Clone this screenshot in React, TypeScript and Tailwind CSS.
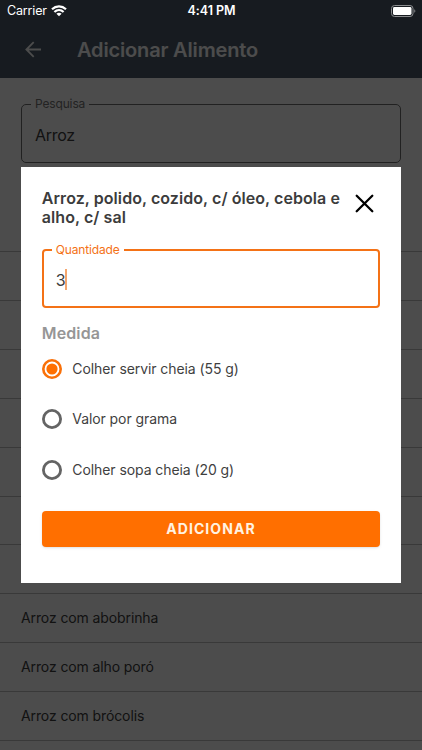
import React from "react";

const FOODS = ["", "", "", "", "", "", "", "Arroz com abobrinha", "Arroz com alho poró", "Arroz com brócolis", ""];

function StatusBar() {
  return (
    <div className="absolute inset-x-0 top-0 z-20 flex h-[22px] items-center justify-between pl-[7px] pr-[6px] text-white">
      <div className="flex flex-1 items-center gap-[4px]">
        <span className="text-[12.5px] leading-[22px] tracking-[-0.15px]">Carrier</span>
        <svg width="16" height="12" viewBox="0 0 16 12" fill="none" stroke="white">
          <path d="M1 4.2C5 .4 11 .4 15 4.2" strokeWidth="2.2" />
          <path d="M3.4 7C6.1 4.5 9.9 4.5 12.6 7" strokeWidth="2.2" />
          <path d="M8 11.3 5.4 8.8C6.9 7.5 9.1 7.5 10.6 8.8Z" fill="white" stroke="none" />
        </svg>
      </div>
      <span className="text-[12.5px] font-semibold leading-[22px] tracking-[-0.05px]">4:41 PM</span>
      <div className="flex flex-1 justify-end">
        <svg className="-mt-px" width="25" height="12" viewBox="0 0 25 12" fill="none">
          <rect x=".5" y=".5" width="21.5" height="11" rx="3" stroke="#8b8d8f" />
          <rect x="2" y="2" width="18.5" height="8" rx="1.4" fill="white" />
          <path d="M23.3 4.2c1.4.6 1.4 3 0 3.6z" fill="#8b8d8f" />
        </svg>
      </div>
    </div>
  );
}

function Radio({ label, checked = false }: { label: string; checked?: boolean }) {
  return (
    <div className="flex h-[50.8px] items-center gap-[10.5px]">
      {checked ? (
        <svg width="20" height="20" viewBox="0 0 20 20">
          <circle cx="10" cy="10" r="8.7" fill="none" stroke="#f97008" strokeWidth="2.6" />
          <circle cx="10" cy="10" r="5.6" fill="#ff6f00" />
        </svg>
      ) : (
        <svg width="20" height="20" viewBox="0 0 20 20">
          <circle cx="10" cy="10" r="8.6" fill="none" stroke="#646464" strokeWidth="2.8" />
        </svg>
      )}
      <span className="pb-px text-[14px] tracking-[-0.08px] text-[#3f3f3f]">{label}</span>
    </div>
  );
}

export default function App() {
  return (
    <div className="relative h-[750px] w-[422px] overflow-hidden bg-white font-[Inter,'Liberation_Sans',sans-serif] text-[#3c3c3c]">
      <StatusBar />
      <header className="flex h-[78px] items-end bg-[#4d5d6b] pb-[16px] pl-[25px] text-white">
        <svg className="mb-[4.5px]" width="17" height="17" viewBox="0 0 17 17" fill="none" stroke="white" strokeWidth="1.8">
          <path d="M16 8.5H1.5M8.7 1.2 1.4 8.5l7.3 7.3" />
        </svg>
        <h1 className="relative top-px ml-[35px] text-[20px] font-semibold leading-[25px] tracking-[-0.16px]">Adicionar Alimento</h1>
      </header>
      <main>
        <div className="h-[173.1px] px-[21px] pt-[18px]">
          <fieldset className="h-[67px] rounded-[5px] border border-[#707070] pl-[9px]">
            <legend className="px-[4px] text-[12px] leading-[16px] tracking-[-0.15px] text-[#757575]">Pesquisa</legend>
            <div className="pl-[4px] pt-[13px] text-[16px] leading-[20px] tracking-[-0.3px]">Arroz</div>
          </fieldset>
        </div>
        <ul>
          {FOODS.map((food, i) => (
            <li key={i} className="flex h-[48.9px] items-center border-t border-[#bebebe] pb-px pl-[21px] text-[14px] tracking-[-0.11px]">
              {food}
            </li>
          ))}
        </ul>
      </main>

      <div className="absolute inset-0 z-10 flex items-center justify-center bg-black/70">
        <section className="h-[415.4px] w-[379.4px] bg-white px-[20.5px] pt-[21.4px]">
          <div className="flex items-start justify-between">
            <h2 className="whitespace-nowrap text-[16px] font-semibold leading-[19.5px] tracking-[0.07px]">
              Arroz, polido, cozido, c/ óleo, cebola e
              <br />
              alho, c/ sal
            </h2>
            <svg className="mr-[6px] mt-[5px]" width="19" height="19" viewBox="0 0 19 19" stroke="black" strokeWidth="2.3" strokeLinecap="round">
              <path d="M1.7 1.7 17.3 17.3M17.3 1.7 1.7 17.3" />
            </svg>
          </div>
          <fieldset className="mt-[14px] h-[66.5px] rounded-[4px] border-2 border-[#f47216] pl-[8px]">
            <legend className="px-[4px] text-[12px] leading-[16px] tracking-[-0.15px] text-[#f47216]">Quantidade</legend>
            <div className="flex items-center pl-[4px] pt-[11px] text-[16px] leading-[22px]">
              3<span className="-ml-[0.5px] h-[21px] w-[1.5px] bg-[#f5a66e]" />
            </div>
          </fieldset>
          <h3 className="mt-[15px] text-[16px] font-semibold leading-[20px] tracking-[0.12px] text-[#969696]">Medida</h3>
          <div>
            <Radio label="Colher servir cheia (55 g)" checked />
            <Radio label="Valor por grama" />
            <Radio label="Colher sopa cheia (20 g)" />
          </div>
          <button className="mt-[15px] block h-[36px] w-full rounded-[4px] bg-[#ff6f00] text-[14px] font-bold tracking-[1.05px] text-[#fff3e2] shadow-sm">
            ADICIONAR
          </button>
        </section>
      </div>
    </div>
  );
}
